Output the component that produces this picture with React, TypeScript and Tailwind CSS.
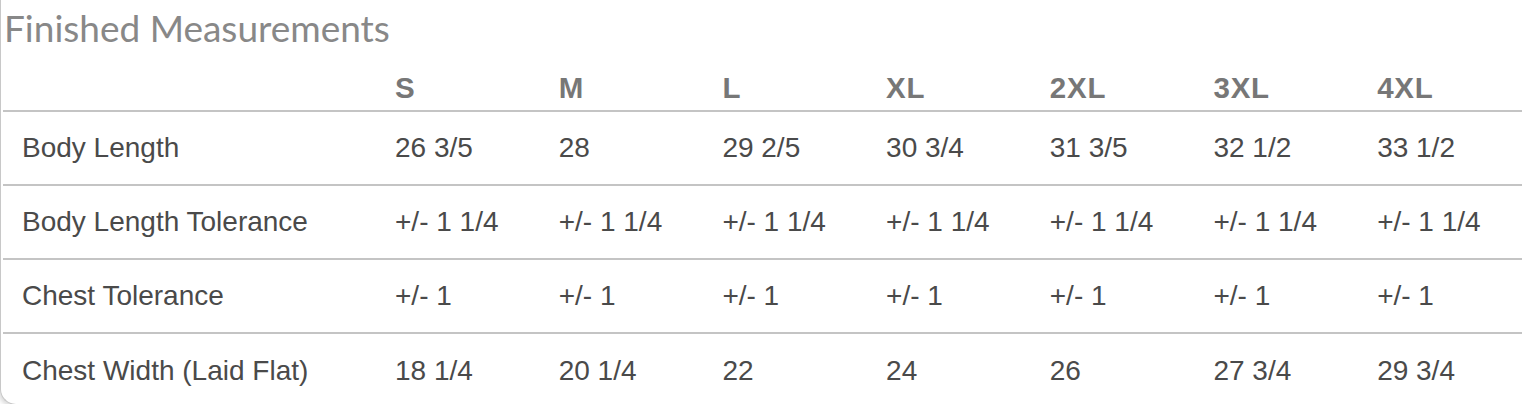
import React from "react";

const sizes = ["S", "M", "L", "XL", "2XL", "3XL", "4XL"];
const rows: { label: string; values: string[] }[] = [
  { label: "Body Length", values: ["26 3/5", "28", "29 2/5", "30 3/4", "31 3/5", "32 1/2", "33 1/2"] },
  { label: "Body Length Tolerance", values: Array(7).fill("+/- 1 1/4") },
  { label: "Chest Tolerance", values: Array(7).fill("+/- 1") },
  { label: "Chest Width (Laid Flat)", values: ["18 1/4", "20 1/4", "22", "24", "26", "27 3/4", "29 3/4"] },
];

export default function App() {
  return (
    <div className="w-[1540px] h-[404px] bg-white overflow-hidden">
      <div className="w-[1540px] h-[405px] border-l border-b border-[#c8c8c8] rounded-bl-[16px] shadow-[-2px_2px_4px_rgba(0,0,0,0.14)] bg-white">
        <h2 className="pl-[3px] pt-[6px] h-[56px] text-[37px] leading-[44px] text-[#888888] font-['Lato',sans-serif]">
          Finished Measurements
        </h2>
        <div className="ml-[2px] w-[1519px] font-['Liberation_Sans',Arial,sans-serif]">
          <div className="grid grid-cols-[373px_repeat(7,163.7px)] h-[56px] border-b-2 border-[#c4c4c4] items-end pb-[5px]">
            <div />
            {sizes.map((s) => (
              <div key={s} className="pl-[19px] text-[29.5px] leading-[34px] tracking-[0.8px] font-bold text-[#777777]">
                {s}
              </div>
            ))}
          </div>
          {rows.map((r, i) => (
            <div
              key={r.label}
              className={
                "grid grid-cols-[373px_repeat(7,163.7px)] h-[74px] items-center text-[28px] text-[#4a4a4a] " +
                (i < rows.length - 1 ? "border-b-2 border-[#c4c4c4]" : "")
              }
            >
              <div className="pl-[19px]">{r.label}</div>
              {r.values.map((v, j) => (
                <div key={j} className="pl-[19px]">
                  {v}
                </div>
              ))}
            </div>
          ))}
        </div>
      </div>
    </div>
  );
}
